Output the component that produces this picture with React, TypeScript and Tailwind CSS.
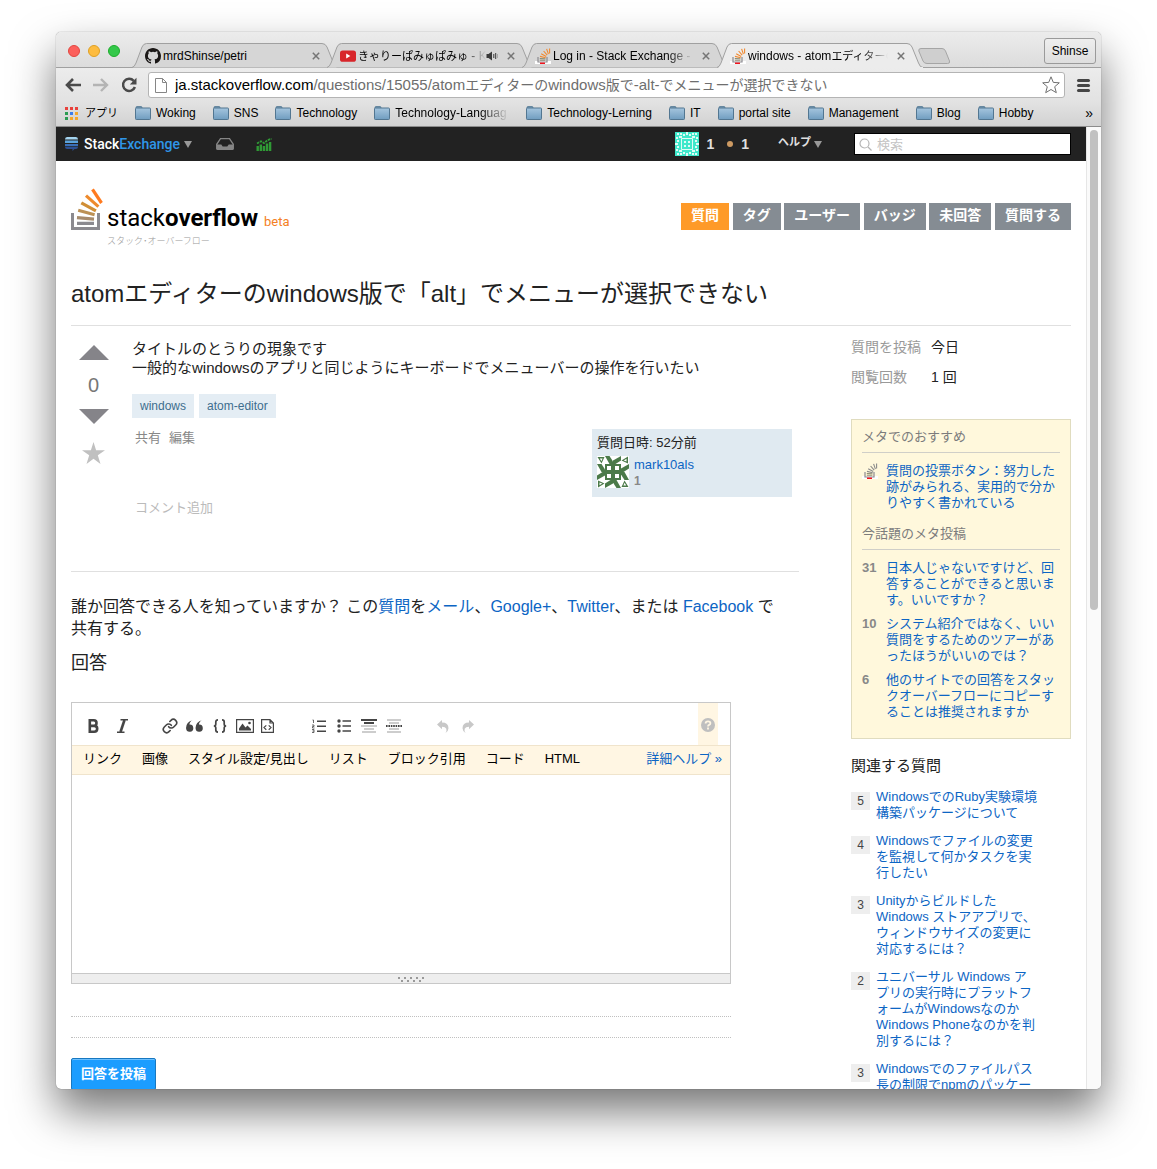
import React from "react";

const SANS = "font-['Liberation_Sans','Noto_Sans_CJK_JP',sans-serif]";

type IconProps = { className?: string };

function StackLogo({ className }: IconProps) {
  return (
    <svg viewBox="0 0 32 43" className={className} fill="none" aria-hidden="true">
      <path d="M1.5 25v15.5h26V25" stroke="#8b8a8f" strokeWidth="3" />
      <path d="M6 35.3h17" stroke="#8b8a8f" strokeWidth="3.2" />
      <path d="M6 29.6l17 1.6" stroke="#a78b6c" strokeWidth="3.2" />
      <path d="M7.2 22.3l16.4 4.4" stroke="#bc9155" strokeWidth="3.2" />
      <path d="M10.3 14.8l14.6 8" stroke="#d08e35" strokeWidth="3.2" />
      <path d="M15 7.6l12.4 11" stroke="#ee8a2c" strokeWidth="3.2" />
      <path d="M21.5 1.4l9 13.6" stroke="#ff7a1f" strokeWidth="3.2" />
    </svg>
  );
}

function Favicon({ mono }: { mono?: boolean }) {
  const c = mono ? "#8a8a8a" : "#f08a32";
  return (
    <svg viewBox="0 0 16 16" className="h-4 w-4 shrink-0" fill="none" aria-hidden="true">
      <path d="M0 13h16v3H0z" fill="#fff" />
      <path d="M3 9v5h9V9" stroke="#8b8a8f" strokeWidth="1.2" />
      <path d="M4.8 12.2h5.6M4.8 10.5l5.6.3" stroke="#8b8a6f" strokeWidth="1" />
      <path d="M5 8.4l5.7 1.4M6.2 5.8l5 2.7M8.6 3l3.6 4.2M11.6.8l1.8 5.4M14.6.4v5" stroke={c} strokeWidth="1.1" />
      <path d="M5 14.5h5v1.500H5z" fill="#f0141e" />
    </svg>
  );
}

function GithubIcon() {
  return (
    <svg viewBox="0 0 16 16" className="h-4 w-4 shrink-0" fill="#1b1817" aria-hidden="true">
      <path d="M8 0C3.58 0 0 3.58 0 8c0 3.54 2.29 6.53 5.47 7.59.4.07.55-.17.55-.38 0-.19-.01-.82-.01-1.49-2.01.37-2.53-.49-2.69-.94-.09-.23-.48-.94-.82-1.13-.28-.15-.68-.52-.01-.53.63-.01 1.08.58 1.23.82.72 1.21 1.87.87 2.33.66.07-.52.28-.87.51-1.07-1.78-.2-3.64-.89-3.64-3.95 0-.87.31-1.59.82-2.15-.08-.2-.36-1.02.08-2.12 0 0 .67-.21 2.2.82a7.5 7.5 0 0 1 4 0c1.53-1.04 2.2-.82 2.2-.82.44 1.1.16 1.92.08 2.12.51.56.82 1.27.82 2.15 0 3.07-1.87 3.75-3.65 3.95.29.25.54.73.54 1.48 0 1.07-.01 1.93-.01 2.2 0 .21.15.46.55.38A8.01 8.01 0 0 0 16 8c0-4.42-3.58-8-8-8z" />
    </svg>
  );
}

function YoutubeIcon() {
  return (
    <svg viewBox="0 0 16 16" className="h-4 w-4 shrink-0" aria-hidden="true">
      <rect x="0" y="2.4" width="16" height="11.4" rx="2.6" fill="#d8252a" />
      <path d="M6.2 5.6v4.8L10.4 8z" fill="#fff" />
    </svg>
  );
}

function SpeakerIcon() {
  return (
    <svg viewBox="0 0 12 10" className="h-[10px] w-3 shrink-0" fill="none" aria-hidden="true">
      <path d="M.5 3h2L6 .4v9.2L2.500 7h-2z" fill="#3a3a3a" />
      <path d="M7.800 3v4M9.700 2v6" stroke="#3a3a3a" strokeWidth="1" />
      <path d="M11.500 3v4" stroke="#aaa" strokeWidth="1" />
    </svg>
  );
}

function Folder() {
  return (
    <svg viewBox="0 0 16 14" className="h-[14px] w-4 shrink-0" aria-hidden="true">
      <defs>
        <linearGradient id="folder" x1="0" y1="0" x2="0" y2="1">
          <stop offset="0" stopColor="#a5c5de" />
          <stop offset="1" stopColor="#709dc0" />
        </linearGradient>
      </defs>
      <path d="M1 2V1.500Q1 .5 2 .5h4q1 0 1 1V2z" fill="#8fb4d0" stroke="#527691" strokeWidth=".8" />
      <rect x=".5" y="2" width="15" height="11.500" rx=".8" fill="url(#folder)" stroke="#527691" />
    </svg>
  );
}

const tabs: { icon: React.ReactNode; title: string; kana?: string; tail?: string; sound?: boolean; active?: boolean }[] = [
  { icon: <GithubIcon />, title: "mrdShinse/petri" },
  { icon: <YoutubeIcon />, title: "", kana: "きゃりーぱみゅぱみゅ", tail: " - K", sound: true },
  { icon: <Favicon />, title: "Log in - Stack Exchange - S" },
  { icon: <Favicon />, title: "windows - atom", kana: "エディターの", active: true },
];

function TitleBar() {
  return (
    <div className="flex h-9 shrink-0 items-end rounded-t-[5px] border-b border-[#a0a0a0] bg-gradient-to-b from-[#ececec] to-[#dcdcdc] pl-3 pr-[5px]">
      <div className="flex h-full shrink-0 items-center gap-2 pt-0.5">
        <span className="h-3 w-3 rounded-full border border-[#e2463f] bg-[#fc605c]" />
        <span className="h-3 w-3 rounded-full border border-[#dfa023] bg-[#fdbc40]" />
        <span className="h-3 w-3 rounded-full border border-[#1dad2b] bg-[#34c84a]" />
      </div>
      <ul className="relative ml-3 flex min-w-0 shrink">
        {tabs.map((t, i) => (
          <li key={i} className={`relative h-6 w-[195px] ${t.active ? "z-10" : ""}`}>
            <svg viewBox="0 0 208 25" className="absolute left-0 top-0 h-[25px] w-[208px]" aria-hidden="true">
              <path
                d="M0 24.500Q2.500 24 4 20L10 4Q11.500.5 14.500.5H190Q193.500.5 195 4L201.500 20Q203 24.500 206 24.500"
                fill={t.active ? "#ececec" : "#d6d6d6"}
                stroke="#a0a0a0"
              />
              {t.active && <path d="M2 24.500h204" stroke="#ececec" />}
            </svg>
            <div className="relative flex h-6 items-center pl-[13px] pr-[5px] pt-0.5">
              {t.icon}
              <a
                href="#tab"
                className={`ml-0.5 flex-1 overflow-hidden whitespace-pre text-xs text-black ${i === 0 ? "" : "[mask-image:linear-gradient(to_right,black_82%,transparent)]"}`}
              >
                {t.title}
                {t.kana && <span className="text-[11px]">{t.kana}</span>}
                {t.tail}
              </a>
              {t.sound && <SpeakerIcon />}
              <button type="button" aria-label="タブを閉じる" className="ml-[7px] flex h-4 w-3 items-center justify-center">
                <svg viewBox="0 0 8 8" className="h-2 w-2" stroke="#757575" strokeWidth="1.500" aria-hidden="true">
                  <path d="M.8.8l6.400 6.400M7.200.8L.8 7.200" />
                </svg>
              </button>
            </div>
          </li>
        ))}
      </ul>
      <button type="button" aria-label="新しいタブ" className="relative mb-[3px] ml-1.5 h-4 w-8 shrink-0">
        <svg viewBox="0 0 32 16" className="h-4 w-8" aria-hidden="true">
          <path d="M3 .5h21q2.500 0 3.500 2.500l4 10q.8 2.500-2 2.500H9q-3 0-4-2.500L.8 3Q.3.5 3 .5z" fill="#cfcfcf" stroke="#a5a5a5" />
        </svg>
      </button>
      <div className="flex-1" />
      <button
        type="button"
        className="mb-[3px] h-[26px] w-[52px] shrink-0 self-end rounded-[3px] border border-[#9a9a9a] bg-gradient-to-b from-[#eee] to-[#dedede] text-xs text-black"
      >
        Shinse
      </button>
    </div>
  );
}

function Toolbar() {
  return (
    <div className="flex h-[34px] shrink-0 items-center bg-gradient-to-b from-[#ececec] to-[#e2e2e2] pl-[9px] pr-[11px]">
      <button type="button" aria-label="戻る">
        <svg viewBox="0 0 16 14" className="h-[14px] w-4" fill="none" stroke="#4a4a4a" strokeWidth="2.600" aria-hidden="true">
          <path d="M8 1L2 7l6 6M2.500 7H16" />
        </svg>
      </button>
      <button type="button" aria-label="進む" className="ml-3">
        <svg viewBox="0 0 16 14" className="h-[14px] w-4" fill="none" stroke="#b4b4b4" strokeWidth="2.400" aria-hidden="true">
          <path d="M8 1l6 6-6 6M13.500 7H0" />
        </svg>
      </button>
      <button type="button" aria-label="再読み込み" className="ml-3">
        <svg viewBox="0 0 16 16" className="h-4 w-4" aria-hidden="true">
          <path d="M12.700 3.800A6.100 6.100 0 1 0 13.900 10" fill="none" stroke="#4a4a4a" strokeWidth="2.500" />
          <path d="M15.500.8v6.700H8.800z" fill="#4a4a4a" />
        </svg>
      </button>
      <div className="ml-[11px] flex h-[26px] min-w-0 flex-1 items-center rounded-[3px] border border-[#b4b4b4] bg-white pl-1.5 pr-1">
        <svg viewBox="0 0 12 15" className="h-[15px] w-3 shrink-0" fill="#fff" stroke="#868686" aria-hidden="true">
          <path d="M.5.5h7l4 4v10H.5zM7.500.5v4h4" />
        </svg>
        <div className="ml-2 min-w-0 flex-1 overflow-hidden whitespace-nowrap text-[15px] leading-5 text-[#6e6e6e]">
          <span className="text-black">ja.stackoverflow.com</span>
          /questions/15055/atom<span className="text-sm">エディターの</span>windows<span className="text-sm">版で</span>-alt-
          <span className="text-sm">でメニューが選択できない</span>
        </div>
        <button type="button" aria-label="ブックマーク">
          <svg viewBox="0 0 18 18" className="h-[18px] w-[18px]" fill="#fff" stroke="#707070" strokeLinejoin="round" aria-hidden="true">
            <path d="M9 .8l2.300 5.600 6 .4-4.600 3.900 1.600 6L9 13.500l-5.300 3.200 1.600-6L.7 6.800l6-.4z" />
          </svg>
        </button>
      </div>
      <button type="button" aria-label="メニュー" className="ml-3 flex w-[13px] flex-col gap-0.5">
        <span className="h-[3px] rounded-sm bg-[#454545]" />
        <span className="h-[3px] rounded-sm bg-[#454545]" />
        <span className="h-[3px] rounded-sm bg-[#454545]" />
      </button>
    </div>
  );
}

const bookmarks = ["Woking", "SNS", "Technology", "Technology-Languag", "Technology-Lerning", "IT", "portal site", "Management", "Blog", "Hobby"];
const appDots = ["#e8413c", "#e8413c", "#e8413c", "#2c9c52", "#3b7ded", "#f4a72c", "#2c9c52", "#f4a72c", "#f4a72c"];

function BookmarksBar() {
  return (
    <div className="flex h-[25px] shrink-0 items-center gap-[17px] border-b border-[#8c8c8c] bg-gradient-to-b from-[#e2e2e2] to-[#d2d2d2] pb-0.5 pl-[9px] pr-2 text-xs text-black">
      <a href="#apps" className="flex shrink-0 items-center gap-[7px]">
        <span className="grid grid-cols-3 gap-0.5">
          {appDots.map((c, i) => (
            <span key={i} className="h-[3px] w-[3px]" style={{ backgroundColor: c }} />
          ))}
        </span>
        <span className="w-[33px] whitespace-nowrap text-[11px]">アプリ</span>
      </a>
      {bookmarks.map((b) => (
        <a key={b} href="#bookmark" className="flex shrink-0 items-center gap-[5px]">
          <Folder />
          <span
            className={
              b === "Technology-Languag"
                ? "w-[114px] overflow-hidden whitespace-nowrap [mask-image:linear-gradient(to_right,black_75%,transparent)]"
                : "whitespace-nowrap"
            }
          >
            {b}
          </span>
        </a>
      ))}
      <button type="button" aria-label="その他のブックマーク" className="ml-auto text-sm leading-4">
        »
      </button>
    </div>
  );
}

function MintAvatar() {
  return (
    <svg viewBox="0 0 24 24" className="h-6 w-6" aria-hidden="true">
      <path d="M0 0h24v24H0z" fill="#3fe8cb" />
      <path
        d="M2 1h2v2H2zM5 1h2v2H5zM8 2h2v2H8zM14 2h2v2h-2zM17 1h2v2h-2zM20 1h2v2h-2zM1 5h2v2H1zM4 4h3v2H4zM17 4h3v2h-3zM21 5h2v2h-2zM2 8h2v2H2zM20 8h2v2h-2zM2 14h2v2H2zM20 14h2v2h-2zM1 17h2v2H1zM4 18h3v2H4zM17 18h3v2h-3zM21 17h2v2h-2zM2 21h2v2H2zM5 21h2v2H5zM8 20h2v2H8zM14 20h2v2h-2zM17 21h2v2h-2zM20 21h2v2h-2zM11 0h2v3h-2zM11 21h2v3h-2zM0 11h3v2H0zM21 11h3v2h-3z"
        fill="#dffcf6"
      />
      <path d="M6.500 6.500h11v11h-11z" fill="none" stroke="#dffcf6" />
      <path d="M9 9h2v2H9zM13 9h2v2h-2zM9 13h2v2H9zM13 13h2v2h-2z" fill="#dffcf6" />
    </svg>
  );
}

const quarterTurns = ["rotate(0 16 16)", "rotate(90 16 16)", "rotate(180 16 16)", "rotate(270 16 16)"];

function GreenAvatar() {
  return (
    <svg viewBox="0 0 32 32" className="h-8 w-8" aria-hidden="true">
      <path d="M0 0h32v32H0z" fill="#fff" />
      {quarterTurns.map((r) => (
        <g key={r} transform={r} fill="#4b7a49">
          <path d="M.5 1h7L4.500 7.500zM2.800 2.500l1.600 2.800L5.600 2.500z" fillRule="evenodd" />
          <path d="M8 0h4.500L16 5.500V8h-3.500z" />
          <path d="M24 0v4.500L18.500 8H16V4.500z" />
        </g>
      ))}
      <path d="M8 8h16v16H8z" fill="#4b7a49" />
      <path d="M10 10h4v4h-4zM18 10h4v4h-4zM10 18h4v4h-4zM18 18h4v4h-4z" fill="#fff" />
    </svg>
  );
}

function Caret() {
  return (
    <svg viewBox="0 0 8 7" className="h-[7px] w-2" fill="#999" aria-hidden="true">
      <path d="M0 0h8L4 7z" />
    </svg>
  );
}

function NetworkBar() {
  return (
    <div className="flex h-[34px] shrink-0 items-center bg-[#222] pl-[9px] pr-[15px] text-xs font-bold text-[#e0e0e0]">
      <svg viewBox="0 0 13 14" className="h-[14px] w-[13px]" aria-hidden="true">
        <path d="M0 2.500Q0 0 2 0h9q2 0 2 2.500z" fill="#a4d4f0" />
        <path d="M0 3.500h13V6H0z" fill="#5ba3dd" />
        <path d="M0 7h13v2.200H0z" fill="#3a6fb8" />
        <path d="M0 10h13q0 2-2 2H9.500L7.500 14v-2H2q-2 0-2-2z" fill="#2c4f93" />
      </svg>
      <a href="#network" className="ml-1.5 flex items-center gap-1">
        <span className="font-['Roboto',sans-serif] text-sm font-medium text-white">
          Stack<span className="text-[#2f96e8]">Exchange</span>
        </span>
        <Caret />
      </a>
      <button type="button" aria-label="受信箱" className="ml-6">
        <svg viewBox="0 0 18 12" className="h-3 w-[18px]" aria-hidden="true">
          <path d="M4.500.7h9l3.800 5.600v4.200q0 .8-.8.8h-15q-.8 0-.8-.8V6.300z" fill="#222" stroke="#858585" strokeWidth="1.300" />
          <path d="M.7 6.500h4.600l1.400 2h4.600l1.400-2h4.600v5H.7z" fill="#858585" />
        </svg>
      </button>
      <button type="button" aria-label="実績" className="ml-[22px]">
        <svg viewBox="0 0 16 13" className="h-[13px] w-4" aria-hidden="true">
          <path d="M.5 8h2.400v5H.5zM3.600 6.500H6V13H3.600zM6.700 8h2.400v5H6.700zM9.800 5.500h2.400V13H9.800zM12.900 4h2.400v9h-2.400z" fill="#2f9a35" />
          <path d="M1 5.500L5 3.200l3 2 3.500-3 4-1.500" fill="none" stroke="#2f9a35" strokeWidth="1.800" strokeDasharray="2.500 .8" />
        </svg>
      </button>
      <div className="flex-1" />
      <a href="#me" className="flex items-center text-sm">
        <MintAvatar />
        <span className="ml-[7px]">1</span>
        <span className="ml-[13px] h-1.5 w-1.5 rounded-full bg-[#cd9a62]" />
        <span className="ml-2">1</span>
      </a>
      <button type="button" className="ml-[29px] flex items-center gap-[3px] font-bold">
        <span className="pb-1 text-[11px]">ヘルプ</span>
        <Caret />
      </button>
      <label className="ml-8 flex h-[22px] w-[217px] items-center gap-[5px] border border-black bg-white pl-1">
        <svg viewBox="0 0 13 13" className="h-[13px] w-[13px] shrink-0" fill="none" stroke="#b5b5b5" strokeWidth="1.200" aria-hidden="true">
          <circle cx="5.500" cy="5.500" r="4.500" />
          <path d="M9 9l3.500 3.500" />
        </svg>
        <input
          type="search"
          aria-label="検索"
          placeholder="検索"
          className="min-w-0 flex-1 bg-transparent pt-0.5 text-[13px] font-normal text-black outline-none placeholder:text-[#c4c4c4]"
        />
      </label>
    </div>
  );
}

const nav = ["質問", "タグ", "ユーザー", "バッジ", "未回答", "質問する"];

function SiteHeader() {
  return (
    <header className="flex h-[60px] items-start justify-between">
      <a href="#home" className="flex items-start">
        <StackLogo className="h-[43px] w-8" />
        <span className="ml-1 mt-4 flex flex-col">
          <span className="flex h-7 items-baseline font-['Roboto',sans-serif] text-2xl leading-7 text-black">
            stack<span className="font-bold">overflow</span>
            <span className="ml-1.5 text-[13px] text-[#f48024]">beta</span>
          </span>
          <span className="mt-0.5 text-[9px] font-light leading-[14px] text-[#999]">スタック･オーバーフロー</span>
        </span>
      </a>
      <nav className="mt-[15px] flex w-[390px] justify-between">
        {nav.map((n, i) => (
          <a
            key={n}
            href="#nav"
            className={`h-[27px] whitespace-nowrap px-2.5 text-sm font-bold leading-[25px] text-white ${i === 0 ? "bg-[#fe9a28]" : "bg-[#858c93]"}`}
          >
            {n}
          </a>
        ))}
      </nav>
    </header>
  );
}

const link = "text-[#0c65c4]";

function Question() {
  return (
    <article className="flex border-b border-[#e0e0e0] pb-[54px] pt-[13px]">
      <div className="mr-4 flex w-[45px] shrink-0 flex-col items-center pt-1.5 text-[#858489]">
        <button type="button" aria-label="賛成">
          <svg viewBox="0 0 30 15" className="h-[15px] w-[30px]" fill="currentColor" aria-hidden="true">
            <path d="M15 0l15 15H0z" />
          </svg>
        </button>
        <span className="mt-[13px] text-xl leading-6 text-[#777]">0</span>
        <button type="button" aria-label="反対" className="mt-3">
          <svg viewBox="0 0 30 15" className="h-[15px] w-[30px]" fill="currentColor" aria-hidden="true">
            <path d="M0 0h30L15 15z" />
          </svg>
        </button>
        <button type="button" aria-label="お気に入り" className="mt-[18px]">
          <svg viewBox="0 0 24 23" className="h-[23px] w-6" fill="#c0c0c0" aria-hidden="true">
            <path d="M11.500 0l2.600 8.200H23l-7.200 5.100L18.500 22l-7-5.300L4.500 22l2.700-8.700L0 8.200h8.900z" />
          </svg>
        </button>
      </div>
      <div className="min-w-0 max-w-[660px] flex-1">
        <p className="text-[15px] leading-[19px] text-[#222]">
          タイトルのとうりの現象です
          <br />
          一般的なwindowsのアプリと同じようにキーボードでメニューバーの操作を行いたい
        </p>
        <div className="mt-[17px] flex gap-[5px] text-xs leading-6 text-[#3e6d8e]">
          <a href="#windows" className="bg-[#e4edf4] px-2">windows</a>
          <a href="#atom-editor" className="bg-[#e4edf4] px-2">atom-editor</a>
        </div>
        <div className="mt-[11px] flex items-start justify-between pl-[3px] text-[13px] leading-[18px]">
          <div className="flex gap-2 text-[#888]">
            <a href="#share">共有</a>
            <a href="#edit">編集</a>
          </div>
          <div className="h-[68px] w-[200px] bg-[#e0eaf1] px-[5px] pt-[5px] text-[#222]">
            <p>質問日時: 52分前</p>
            <div className="mt-1 flex gap-[5px] leading-[17px]">
              <GreenAvatar />
              <div>
                <a href="#user" className={link}>mark10als</a>
                <p className="text-xs font-bold leading-[17px] text-[#888]">1</p>
              </div>
            </div>
          </div>
        </div>
        <a href="#comment" className="mt-0.5 block pl-[3px] text-[13px] leading-[18px] text-[#bbb]">コメント追加</a>
      </div>
    </article>
  );
}

function Tool({ label, className = "", children }: { label: string; className?: string; children: React.ReactNode }) {
  return (
    <button type="button" aria-label={label} className={`mt-1 flex h-5 w-[25px] shrink-0 items-center justify-center ${className}`}>
      {children}
    </button>
  );
}

const helpTabs = ["リンク", "画像", "スタイル設定/見出し", "リスト", "ブロック引用", "コード", "HTML"];

function Editor() {
  return (
    <div className="max-w-[660px] border border-[#c8c8c8] bg-white">
      <div className="flex h-[42px] items-center pl-[9px] pr-3 text-[#454545]">
        <Tool label="太字">
          <svg viewBox="0 0 11 14" className="h-[14px] w-[11px]" fill="none" stroke="currentColor" strokeWidth="2.600" aria-hidden="true">
            <path d="M1.800 1.300h4q2.700 0 2.700 2.800t-2.700 2.800h-4zM1.800 6.900h4.400q3 0 3 2.900t-3 2.900H1.800z" />
          </svg>
        </Tool>
        <Tool label="斜体" className="ml-1">
          <svg viewBox="0 0 13 14" className="h-[14px] w-[13px]" fill="none" stroke="currentColor" aria-hidden="true">
            <path d="M8.500 1L4.500 13" strokeWidth="2.600" />
            <path d="M4.500.8H12M1 13.200h7.500" strokeWidth="1.400" />
          </svg>
        </Tool>
        <Tool label="リンク" className="ml-[22px]">
          <svg viewBox="0 0 24 24" className="h-4 w-4" fill="none" stroke="currentColor" strokeWidth="2.400" strokeLinecap="round" aria-hidden="true">
            <path d="M10 13a5 5 0 0 0 7.540.54l3-3a5 5 0 0 0-7.070-7.070l-1.720 1.710" />
            <path d="M14 11a5 5 0 0 0-7.540-.54l-3 3a5 5 0 0 0 7.070 7.070l1.710-1.710" />
          </svg>
        </Tool>
        <Tool label="引用">
          <svg viewBox="0 0 17 12" className="h-3 w-[17px]" fill="currentColor" aria-hidden="true">
            <path d="M6.800 0Q3.600 1.500 3.400 4.600a3.600 3.600 0 1 1-3.300 4Q-.4 2.400 6.800 0zM16.300 0q-3.200 1.500-3.400 4.600a3.600 3.600 0 1 1-3.300 4Q9.100 2.400 16.300 0z" />
          </svg>
        </Tool>
        <Tool label="コード">
          <svg viewBox="0 0 14 14" className="h-[14px] w-[14px]" fill="none" stroke="currentColor" strokeWidth="1.700" aria-hidden="true">
            <path d="M5 .9q-2.200 0-2.200 2v2Q2.800 7 .8 7q2 0 2 2.100v2q0 2 2.200 2M9 .9q2.200 0 2.200 2v2q0 2.100 2 2.100-2 0-2 2.100v2q0 2-2.200 2" />
          </svg>
        </Tool>
        <Tool label="画像">
          <svg viewBox="0 0 18 14" className="h-[14px] w-[18px]" aria-hidden="true">
            <path d="M.6.6h16.800v12.800H.6z" fill="none" stroke="currentColor" strokeWidth="1.200" />
            <path d="M3 11.500V9.500l3.500-5 3 4 2-2 3.500 3.500v1.500z" fill="currentColor" />
            <circle cx="13.500" cy="4" r="1.300" fill="currentColor" />
          </svg>
        </Tool>
        <Tool label="スニペット" className="-ml-0.5">
          <svg viewBox="0 0 13 14" className="h-[14px] w-[13px]" fill="none" stroke="currentColor" strokeWidth="1.200" aria-hidden="true">
            <path d="M.6.6h8.400l3.400 3.400v9.400H.6zM9 .6V4h3.400M5.300 6.400L3 8.600l2.300 2.200M7.700 6.400L10 8.600l-2.300 2.200" />
          </svg>
        </Tool>
        <Tool label="番号付きリスト" className="ml-[26px]">
          <svg viewBox="0 0 14 14" className="h-[14px] w-[14px]" fill="none" stroke="currentColor" aria-hidden="true">
            <path d="M5 2.300h9M5 7.300h9M5 12.300h9" strokeWidth="1.500" />
            <path d="M.5 1h1v3M0 6h2v1.500H.5V9h2M0 10.500h2V13.500H0M.5 12h1.500" strokeWidth=".8" />
          </svg>
        </Tool>
        <Tool label="箇条書き">
          <svg viewBox="0 0 14 14" className="h-[14px] w-[14px]" aria-hidden="true">
            <path d="M5.500 2h8.500M5.500 7h8.500M5.500 12h8.500" stroke="currentColor" strokeWidth="1.600" />
            <circle cx="2" cy="2" r="1.700" fill="currentColor" />
            <circle cx="2" cy="7" r="1.700" fill="currentColor" />
            <circle cx="2" cy="12" r="1.700" fill="currentColor" />
          </svg>
        </Tool>
        <Tool label="見出し">
          <svg viewBox="0 0 16 14" className="h-[14px] w-4" aria-hidden="true">
            <path d="M0 1h16M3 4h10" stroke="currentColor" strokeWidth="1.800" />
            <path d="M0 7h16M3 10h10M1 13h14" stroke="#bdbdbd" strokeWidth="1.300" />
          </svg>
        </Tool>
        <Tool label="区切り線">
          <svg viewBox="0 0 16 14" className="h-[14px] w-4" aria-hidden="true">
            <path d="M1 1h14M3 4h10M3 10h10M1 13h14" stroke="#bdbdbd" strokeWidth="1.300" />
            <path d="M0 7h16" stroke="currentColor" strokeWidth="1.800" strokeDasharray="1.600 .8" />
          </svg>
        </Tool>
        <Tool label="元に戻す" className="ml-6 text-[#c8c8c8]">
          <svg viewBox="0 0 12 13" className="h-[13px] w-3" fill="currentColor" aria-hidden="true">
            <path d="M5 0v2.600q6.500 0 6.500 5.600 0 2.600-3 4.800 1.500-2.300.8-4.300-.8-2-4.300-2v2.600L0 4.600z" />
          </svg>
        </Tool>
        <Tool label="やり直す" className="text-[#c8c8c8]">
          <svg viewBox="0 0 12 13" className="h-[13px] w-3" fill="currentColor" aria-hidden="true">
            <path d="M7 0v2.600q-6.500 0-6.500 5.600 0 2.600 3 4.800-1.500-2.300-.8-4.300.8-2 4.300-2v2.600l5-4.700z" />
          </svg>
        </Tool>
        <button type="button" aria-label="ヘルプ" className="ml-auto flex h-full w-5 items-center justify-center bg-[#fff6e3] pt-0.5">
          <svg viewBox="0 0 14 14" className="h-[14px] w-[14px]" aria-hidden="true">
            <circle cx="7" cy="7" r="7" fill="#bfbfbf" />
            <path d="M4.600 5.400q0-2.100 2.400-2.100t2.400 1.900q0 1.200-1.300 1.700Q7 7.300 7 8.600M7 9.600v1.800" fill="none" stroke="#fff6e3" strokeWidth="1.800" />
          </svg>
        </button>
      </div>
      <div className="flex h-[30px] items-center gap-5 border-y border-[#f0e4cc] bg-[#fff6e3] pb-0.5 pl-[11px] pr-2 text-[13px] text-black">
        {helpTabs.map((t) => (
          <button key={t} type="button" className="whitespace-nowrap">{t}</button>
        ))}
        <a href="#help" className={`ml-auto whitespace-nowrap ${link}`}>詳細ヘルプ »</a>
      </div>
      <textarea aria-label="回答" className="block h-[198px] w-full resize-none outline-none" />
      <div className="flex h-[10px] items-center justify-center border-t border-[#c8c8c8] bg-[#eee] pl-5 pt-0.5">
        <svg viewBox="0 0 27 5" className="h-[5px] w-[27px]" aria-hidden="true">
          <path d="M0 1h27" stroke="#999" strokeWidth="2" strokeDasharray="2 4" />
          <path d="M3 4h21" stroke="#999" strokeWidth="2" strokeDasharray="2 4" />
        </svg>
      </div>
    </div>
  );
}

const metaPosts = [
  { n: "31", t: "日本人じゃないですけど、回\n答することができると思いま\nす。いいですか？" },
  { n: "10", t: "システム紹介ではなく、いい\n質問をするためのツアーがあ\nったほうがいいのでは？" },
  { n: "6", t: "他のサイトでの回答をスタッ\nクオーバーフローにコピーす\nることは推奨されますか" },
];
const related = [
  { n: "5", t: "WindowsでのRuby実験環境\n構築パッケージについて" },
  { n: "4", t: "Windowsでファイルの変更\nを監視して何かタスクを実\n行したい" },
  { n: "3", t: "Unityからビルドした\nWindows ストアアプリで、\nウィンドウサイズの変更に\n対応するには？" },
  { n: "2", t: "ユニバーサル Windows ア\nプリの実行時にプラットフ\nォームがWindowsなのか\nWindows Phoneなのかを判\n別するには？" },
  { n: "3", t: "Windowsでのファイルパス\n長の制限でnpmのパッケー" },
];

function MetaRow({ lead, text }: { lead: React.ReactNode; text: string }) {
  return (
    <li className="flex">
      <span className="w-6 shrink-0 font-bold text-[#888]">{lead}</span>
      <a href="#meta" className={`whitespace-pre ${link}`}>{text}</a>
    </li>
  );
}

function Sidebar() {
  return (
    <aside className="w-[220px] shrink-0 text-[13px] leading-4">
      <dl className="grid grid-cols-[80px_1fr] gap-y-2.5 pt-[11px] text-sm leading-5">
        <dt className="text-[#999]">質問を投稿</dt>
        <dd className="text-[#222]">今日</dd>
        <dt className="text-[#999]">閲覧回数</dt>
        <dd className="text-[#222]">1 回</dd>
      </dl>
      <section className="mt-8 border border-[#e0dcbf] bg-[#fff8dc] px-2.5 pb-[18px] pt-[9px]">
        <h2 className="border-b border-[#d0cfc8] pb-[7px] text-[#7c7c7c]">メタでのおすすめ</h2>
        <ul className="mt-[10px]">
          <MetaRow lead={<Favicon mono />} text={"質問の投票ボタン：努力した\n跡がみられる、実用的で分か\nりやすく書かれている"} />
        </ul>
        <h2 className="mt-[15px] border-b border-[#d0cfc8] pb-[7px] text-[#7c7c7c]">今話題のメタ投稿</h2>
        <ul className="mt-[10px] flex flex-col gap-2">
          {metaPosts.map((p) => (
            <MetaRow key={p.n} lead={p.n} text={p.t} />
          ))}
        </ul>
      </section>
      <h2 className="mt-[17px] text-[15px] leading-5 text-[#222]">関連する質問</h2>
      <ul className="mt-[13px] flex flex-col gap-3">
        {related.map((r) => (
          <li key={r.t} className="flex items-start gap-1.5">
            <span className="mt-[3px] h-[18px] w-[19px] shrink-0 bg-[#eee] text-center text-xs leading-[18px] text-[#444]">{r.n}</span>
            <a href="#related" className={`whitespace-pre ${link}`}>{r.t}</a>
          </li>
        ))}
      </ul>
    </aside>
  );
}

export default function App() {
  return (
    <div className={`h-screen overflow-hidden bg-white px-14 pb-20 pt-8 ${SANS}`}>
      <div className="flex h-full flex-col overflow-hidden rounded-[5px] bg-white shadow-[0_22px_44px_rgba(0,0,0,0.54),0_0_1px_rgba(0,0,0,0.6)]">
        <TitleBar />
        <Toolbar />
        <BookmarksBar />
        <div className="flex min-h-0 flex-1">
          <div className="flex min-w-0 flex-1 flex-col overflow-hidden">
            <NetworkBar />
            <div className="min-h-0 flex-1 overflow-hidden px-[15px] pt-[27px]">
              <SiteHeader />
              <h1 className="mt-[31px] border-b border-[#e0e0e0] pb-4 text-2xl leading-[30px] text-[#222]">
                atomエディターのwindows版で「alt」でメニューが選択できない
              </h1>
              <div className="flex justify-between">
                <main className="min-w-0 max-w-[728px] flex-1">
                  <Question />
                  <p className="mt-6 text-base leading-[22px] text-[#222]">
                    誰か回答できる人を知っていますか？ この<a href="#q" className={link}>質問</a>を
                    <a href="#mail" className={link}>メール</a>、<a href="#google" className={link}>Google+</a>、
                    <a href="#twitter" className={link}>Twitter</a>、または <a href="#facebook" className={link}>Facebook</a> で
                    <br />
                    共有する。
                  </p>
                  <h2 className="mt-[11px] text-lg leading-6 text-[#222]">回答</h2>
                  <form className="mt-[27px]">
                    <Editor />
                    <div className="mt-8 h-[22px] max-w-[660px] border-y border-dotted border-[#c0c0c0]" />
                    <button
                      type="button"
                      className="mt-5 h-8 rounded-[2px] border border-[#1878c0] bg-[#1b9dff] px-[9px] text-[13px] font-bold text-white shadow-[inset_0_1px_0_#6cc0ff]"
                    >
                      回答を投稿
                    </button>
                  </form>
                </main>
                <Sidebar />
              </div>
            </div>
          </div>
          <div className="w-[15px] shrink-0 border-l border-[#e6e6e6] bg-[#fafafa] pl-[3px] pt-[3px]">
            <div className="h-1/2 w-2 rounded-full bg-[#c1c1c1]" />
          </div>
        </div>
      </div>
    </div>
  );
}
